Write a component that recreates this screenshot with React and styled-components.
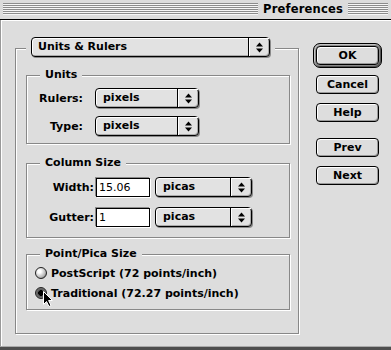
import React from 'react'
import styled, { createGlobalStyle } from 'styled-components'

const GlobalStyle = createGlobalStyle`
html, body { margin: 0; padding: 0; background: #dddddd; }
body {
    font-family: "DejaVu Sans", "Liberation Sans", sans-serif;
    font-size: 11px;
    font-weight: bold;
    color: #000;
}`

const etched = `
border: 1px solid #888;
box-shadow: 1px 1px 0 #fff, inset 1px 1px 0 #fff;`

const Window = styled.div`
position: relative;
width: 391px;
height: 350px;
display: flex;
flex-direction: column;
background: #dddddd;
overflow: hidden;`

const TitleBar = styled.div`
height: 20px;
box-sizing: border-box;
display: flex;
align-items: flex-start;
padding: 3px 3px 0;
border-bottom: 1px solid #000;
background: #dcdcdc;`

const Stripes = styled.div`
height: 12px;
${props => props.width ? `width: ${props.width}px;` : 'flex: 1;'}
background: repeating-linear-gradient(to bottom, #8c8c8c 0 1px, #f6f6f6 1px 2px);`

const Title = styled.div`
margin: 0 5px;
font-size: 11.5px;
line-height: 12px;
letter-spacing: 0.2px;`

const Body = styled.div`
flex: 1;
display: flex;
align-items: flex-start;
padding: 17px 0 0 14px;
border-left: 1px solid #999;
box-shadow: inset 1px 1px 0 #fff;`

const Footer = styled.div`
height: 3px;
border-top: 1px solid #aaa;
background: #4e4e4e;`

const Panel = styled.div`
width: 284px;
box-sizing: border-box;
margin-top: 11px;
padding: 0 8px 23px 10px;
display: flex;
flex-direction: column;
${etched}`

const PanelHead = styled.div`
align-self: flex-start;
margin-top: -12px;
padding: 0 5px;
background: #dddddd;`

const Group = styled.div`
display: flex;
flex-direction: column;
margin-top: ${props => props.top}px;
padding-bottom: ${props => props.bottom}px;
${etched}`

const GroupLabel = styled.div`
align-self: flex-start;
height: 14px;
line-height: 14px;
margin: -8px 0 ${props => props.after}px 13px;
padding: 0 5px;
background: #dddddd;`

const Rows = styled.div`
display: flex;
flex-direction: column;
gap: ${props => props.gap}px;`

const Row = styled.div`
display: flex;
align-items: center;
height: ${props => props.h || 20}px;
white-space: nowrap;`

const FieldLabel = styled.div`
width: ${props => props.w}px;
margin-right: ${props => props.gap}px;
text-align: right;`

const PopupBox = styled.div`
display: flex;
align-items: stretch;
width: ${props => props.w}px;
height: 20px;
box-sizing: border-box;
margin-left: ${props => props.left || 0}px;
border: 1px solid #000;
border-radius: 4px;
background: #e2e2e2;
box-shadow: 1px 1px 0 #8a8a8a, inset 1px 1px 0 #fff, inset -1px -1px 0 #aaa;`

const PopupText = styled.div`
flex: 1;
padding-left: ${props => props.pad || 6}px;
line-height: 18px;`

const PopupArrow = styled.div`
width: 20px;
display: flex;
align-items: center;
justify-content: center;
border-left: 1px solid #000;
box-shadow: inset 1px 1px 0 #fff;`

const TextField = styled.div`
width: 54px;
height: 19px;
box-sizing: border-box;
border: 1px solid #000;
background: #fff;
box-shadow: -1px -1px 0 #8a8a8a, 1px 1px 0 #fff;
padding-left: 2px;
font-weight: normal;
line-height: 17px;`

const RadioDot = styled.span`
display: inline-block;
width: 12px;
height: 12px;
box-sizing: border-box;
margin: 0 4px 0 8px;
border-radius: 50%;
border: 1px solid #222;
background: ${props => props.checked
    ? 'radial-gradient(circle at 50% 50%, #000 0 2.6px, #555 3px, #888 6px)'
    : 'radial-gradient(circle at 35% 35%, #fff 0 1.5px, #e6e6e6 3px, #b4b4b4 6px, #888 7px)'};`

const ButtonColumn = styled.div`
width: 69px;
display: flex;
flex-direction: column;
align-items: center;
margin: 6px 0 0 14px;`

const DefaultRing = styled.div`
padding: 2px;
border: 1px solid #000;
border-radius: 7px;
background: #8a8a8a;
box-shadow: inset 1px 1px 0 #c4c4c4, inset -1px -1px 0 #555;`

const Button = styled.div`
width: 63px;
height: 19px;
box-sizing: border-box;
margin-top: ${props => props.top || 0}px;
display: flex;
align-items: center;
justify-content: center;
border: 1px solid #000;
border-radius: 4px;
background: #dddddd;
box-shadow: inset 1px 1px 0 #fff, inset -1px -1px 0 #999;`

const Pointer = styled.svg`
position: absolute;
left: 42px;
top: 290px;`

function Arrows() {
    return <svg width="7" height="11" viewBox="0 0 7 11">
        <polygon points="3.5,0.5 7,4.5 0,4.5" fill="#000" />
        <polygon points="0,6.5 7,6.5 3.5,10.5" fill="#000" />
    </svg>
}

function Popup({w, left, pad, children}) {
    return <PopupBox w={w} left={left}>
        <PopupText pad={pad}>{children}</PopupText>
        <PopupArrow><Arrows /></PopupArrow>
    </PopupBox>
}

export default function App() {
    return <Window>
        <GlobalStyle />
        <TitleBar>
            <Stripes width={255} />
            <Title>Preferences</Title>
            <Stripes />
        </TitleBar>
        <Body>
            <Panel>
                <PanelHead>
                    <Popup w={239}>Units &amp; Rulers</Popup>
                </PanelHead>

                <Group top={18} bottom={7}>
                    <GroupLabel after={6}>Units</GroupLabel>
                    <Rows gap={8}>
                        <Row>
                            <FieldLabel w={56} gap={12}>Rulers:</FieldLabel>
                            <Popup w={104} pad={7}>pixels</Popup>
                        </Row>
                        <Row>
                            <FieldLabel w={56} gap={12}>Type:</FieldLabel>
                            <Popup w={104} pad={7}>pixels</Popup>
                        </Row>
                    </Rows>
                </Group>

                <Group top={19} bottom={10}>
                    <GroupLabel after={7}>Column Size</GroupLabel>
                    <Rows gap={10}>
                        <Row>
                            <FieldLabel w={67} gap={2}>Width:</FieldLabel>
                            <TextField>15.06</TextField>
                            <Popup w={97} left={5} pad={7}>picas</Popup>
                        </Row>
                        <Row>
                            <FieldLabel w={67} gap={2}>Gutter:</FieldLabel>
                            <TextField>1</TextField>
                            <Popup w={97} left={5} pad={7}>picas</Popup>
                        </Row>
                    </Rows>
                </Group>

                <Group top={16} bottom={9}>
                    <GroupLabel after={5}>Point/Pica Size</GroupLabel>
                    <Rows gap={6}>
                        <Row h={14}>
                            <RadioDot />
                            PostScript (72 points/inch)
                        </Row>
                        <Row h={14}>
                            <RadioDot checked />
                            Traditional (72.27 points/inch)
                        </Row>
                    </Rows>
                </Group>
            </Panel>

            <ButtonColumn>
                <DefaultRing><Button>OK</Button></DefaultRing>
                <Button top={7}>Cancel</Button>
                <Button top={9}>Help</Button>
                <Button top={16}>Prev</Button>
                <Button top={9}>Next</Button>
            </ButtonColumn>
        </Body>
        <Footer />

        <Pointer width="12" height="18" viewBox="0 0 12 18">
            <path d="M1.5 1.5 L1.5 14.5 L4.5 11.5 L7 16.5 L9 15.5 L6.6 10.5 L10.5 10.5 Z"
                fill="#000" stroke="#fff" strokeWidth="1" strokeLinejoin="miter" />
        </Pointer>
    </Window>
}
